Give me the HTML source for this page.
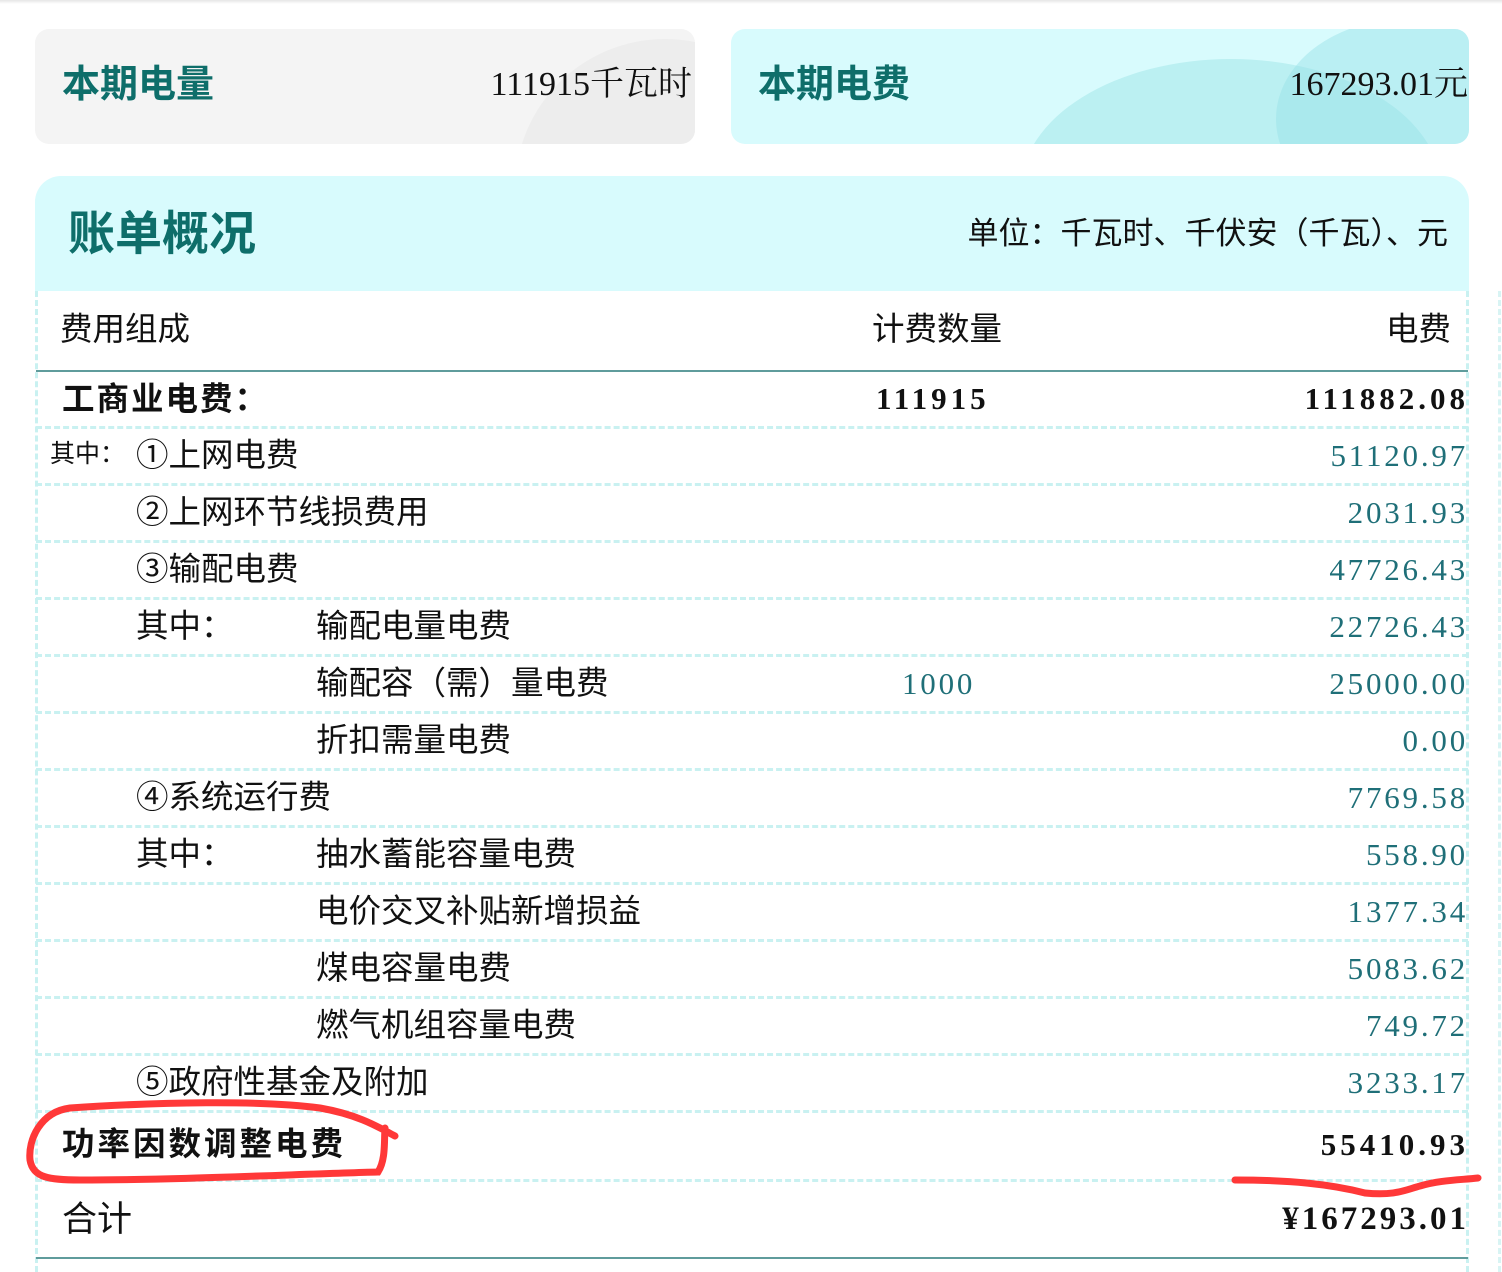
<!DOCTYPE html>
<html><head><meta charset="utf-8"><style>
*{margin:0;padding:0;box-sizing:border-box}
body{width:1502px;height:1272px;background:#fff;position:relative;overflow:hidden;font-family:"Liberation Sans","Noto Sans CJK SC",sans-serif;color:#111}
.a{position:absolute;white-space:nowrap;line-height:1}
.cn{font-size:32.5px}
.num{font-family:"Liberation Serif","Noto Serif CJK SC",serif;font-size:31px;letter-spacing:2.8px;color:#1f6f78;text-align:right}
.b{color:#111;font-weight:bold;letter-spacing:4px}
.dash{position:absolute;left:36px;width:1432px;height:0;border-top:3px dashed #c9f1f1}
.tl{color:#0e6e6a;font-weight:bold}
</style></head><body>
<div style="position:absolute;left:0;top:0;width:1502px;height:4px;background:linear-gradient(#e6e6e6,#fff)"></div>
<div style="position:absolute;left:35px;top:29px;width:660px;height:115px;background:#f4f4f4;border-radius:14px;overflow:hidden">
<div style="position:absolute;left:480px;top:10px;width:300px;height:300px;border-radius:50%;background:#ededed"></div>
</div>
<div class="a tl" style="left:62px;top:66px;font-size:38px">本期电量</div>
<div class="a" style="right:810px;top:68px;font-size:34px;font-family:'Liberation Serif','Noto Serif CJK SC',serif">111915千瓦时</div>
<div style="position:absolute;left:731px;top:29px;width:738px;height:115px;background:#d8fbfd;border-radius:14px;overflow:hidden">
<div style="position:absolute;left:290px;top:30px;width:420px;height:260px;border-radius:50%;background:#bbf0f2"></div>
<div style="position:absolute;left:545px;top:-10px;width:260px;height:200px;border-radius:50%;background:rgba(150,225,230,.45)"></div>
</div>
<div class="a tl" style="left:758px;top:66px;font-size:38px">本期电费</div>
<div class="a" style="right:34px;top:68px;font-size:34px;font-family:'Liberation Serif','Noto Serif CJK SC',serif">167293.01元</div>
<div style="position:absolute;left:35px;top:176px;width:1434px;height:115px;background:#d8fbfd;border-radius:26px 26px 0 0"></div>
<div class="a tl" style="left:68px;top:210px;font-size:47px">账单概况</div>
<div class="a cn" style="right:54px;top:218px;font-size:31px">单位：千瓦时、千伏安（千瓦）、元</div>
<div style="position:absolute;left:35px;top:291px;height:981px;border-left:3px dashed #c9f1f1"></div>
<div style="position:absolute;left:1466px;top:291px;height:981px;border-left:3px dashed #c9f1f1"></div>
<div style="position:absolute;left:1498px;top:291px;height:981px;border-left:3px dashed #d8f4f4"></div>
<div class="a cn" style="left:60px;top:313px">费用组成</div>
<div class="a cn" style="left:872px;top:313px">计费数量</div>
<div class="a cn" style="left:1386px;top:313px">电费</div>
<div style="position:absolute;left:36px;top:370px;width:1432px;height:2px;background:#5f9c9c"></div>
<div class="a cn" style="left:62px;top:383px;font-weight:bold;letter-spacing:2px">工商业电费：</div>
<div class="a num b" style="left:876px;top:383px">111915</div>
<div class="a num b" style="right:33px;top:383px">111882.08</div>

<div class="dash" style="top:426px"></div>
<div class="a" style="left:50px;top:442px;font-size:25px">其中：</div>
<div class="a cn" style="left:136px;top:439px">①上网电费</div>
<div class="a num" style="right:34px;top:440px">51120.97</div>
<div class="dash" style="top:483px"></div>
<div class="a cn" style="left:136px;top:496px">②上网环节线损费用</div>
<div class="a num" style="right:34px;top:497px">2031.93</div>
<div class="dash" style="top:540px"></div>
<div class="a cn" style="left:136px;top:553px">③输配电费</div>
<div class="a num" style="right:34px;top:554px">47726.43</div>
<div class="dash" style="top:597px"></div>
<div class="a cn" style="left:136px;top:610px">其中：</div>
<div class="a cn" style="left:316px;top:610px">输配电量电费</div>
<div class="a num" style="right:34px;top:611px">22726.43</div>
<div class="dash" style="top:654px"></div>
<div class="a cn" style="left:316px;top:667px">输配容（需）量电费</div>
<div class="a num" style="left:902px;top:668px">1000</div>
<div class="a num" style="right:34px;top:668px">25000.00</div>
<div class="dash" style="top:711px"></div>
<div class="a cn" style="left:316px;top:724px">折扣需量电费</div>
<div class="a num" style="right:34px;top:725px">0.00</div>
<div class="dash" style="top:768px"></div>
<div class="a cn" style="left:136px;top:781px">④系统运行费</div>
<div class="a num" style="right:34px;top:782px">7769.58</div>
<div class="dash" style="top:825px"></div>
<div class="a cn" style="left:136px;top:838px">其中：</div>
<div class="a cn" style="left:316px;top:838px">抽水蓄能容量电费</div>
<div class="a num" style="right:34px;top:839px">558.90</div>
<div class="dash" style="top:882px"></div>
<div class="a cn" style="left:316px;top:895px">电价交叉补贴新增损益</div>
<div class="a num" style="right:34px;top:896px">1377.34</div>
<div class="dash" style="top:939px"></div>
<div class="a cn" style="left:316px;top:952px">煤电容量电费</div>
<div class="a num" style="right:34px;top:953px">5083.62</div>
<div class="dash" style="top:996px"></div>
<div class="a cn" style="left:316px;top:1009px">燃气机组容量电费</div>
<div class="a num" style="right:34px;top:1010px">749.72</div>
<div class="dash" style="top:1053px"></div>
<div class="a cn" style="left:136px;top:1066px">⑤政府性基金及附加</div>
<div class="a num" style="right:34px;top:1067px">3233.17</div>
<div class="dash" style="top:1110px"></div>
<div class="a cn" style="left:62px;top:1128px;font-weight:bold;letter-spacing:3px">功率因数调整电费</div>
<div class="a num b" style="right:33px;top:1129px">55410.93</div>
<div class="dash" style="top:1179px"></div>
<div class="a cn" style="left:62px;top:1202px;font-size:35px">合计</div>
<div class="a num b" style="right:33px;top:1203px;font-size:33px;letter-spacing:3px">¥167293.01</div>
<div style="position:absolute;left:36px;top:1257px;width:1432px;height:2px;background:#5f9c9c"></div>
<svg style="position:absolute;left:0;top:0" width="1502" height="1272">
<path d="M395 1136 C380 1128 360 1115 320 1108 C260 1100 160 1102 70 1108 C40 1112 28 1140 30 1160 C33 1178 50 1180 80 1180 C180 1180 300 1174 378 1172 C386 1160 384 1140 385 1128" fill="none" stroke="#ff3838" stroke-width="7" stroke-linecap="round"/>
<path d="M1235 1180 C1290 1180 1330 1184 1365 1193 C1395 1196 1405 1190 1420 1186 C1440 1180 1460 1180 1478 1178" fill="none" stroke="#ff3838" stroke-width="7" stroke-linecap="round"/>
</svg>
</body></html>
